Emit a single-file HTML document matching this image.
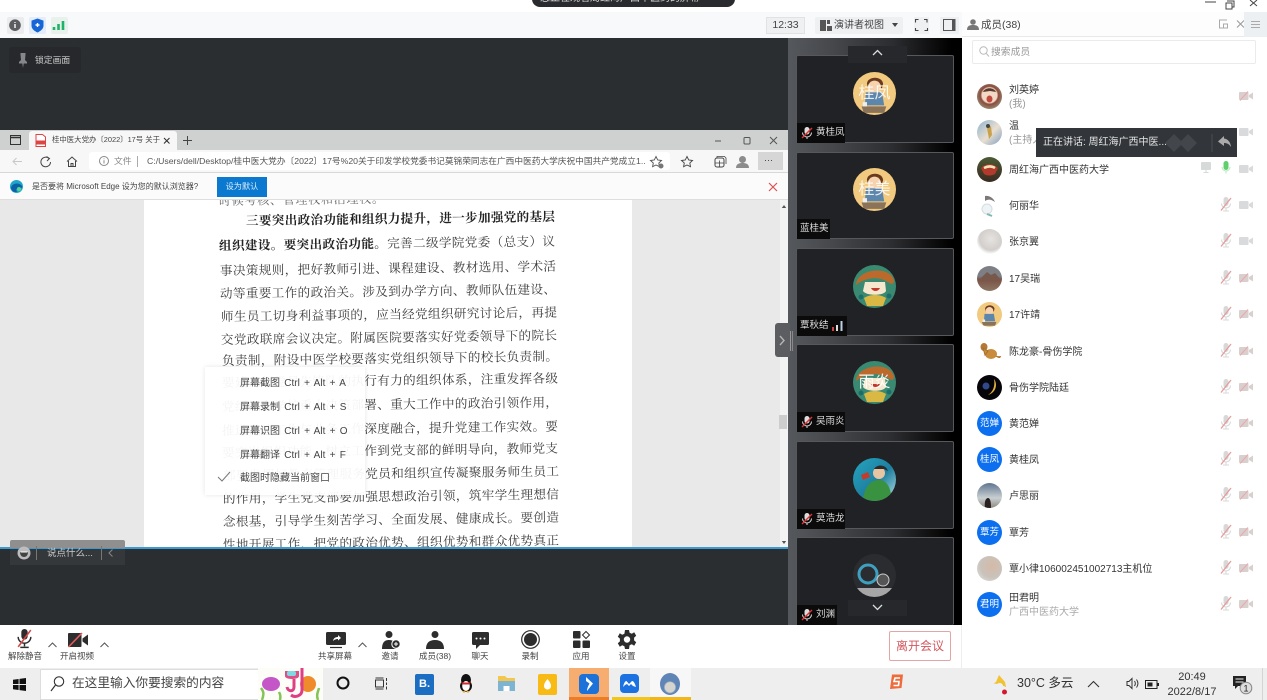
<!DOCTYPE html>
<html lang="zh"><head><meta charset="utf-8"><title>会议</title>
<style>
*{box-sizing:border-box;margin:0;padding:0}
html,body{width:1267px;height:700px;overflow:hidden;background:#fff}
body{font-family:"Liberation Sans","Noto Sans CJK SC",sans-serif;position:relative;color:#333;filter:blur(.3px)}
.a{position:absolute;white-space:nowrap}
svg{position:absolute;overflow:visible}
.ln{position:absolute;height:18px;line-height:18px;font-family:"Liberation Serif","Noto Serif CJK SC",serif;font-size:12.6px;color:#3b3b3b;text-align:justify;text-align-last:justify;white-space:normal;transform:rotate(-.75deg);transform-origin:0 50%}
.ln b{font-weight:700;color:#222}
.th{position:absolute;left:796px;width:158px;background:#212225;border:1px solid #56585b;border-radius:2px}
.lb{position:absolute;background:#0b0b0c;color:#ddd;font-size:9.5px;height:20px;line-height:20px;white-space:nowrap}
.av{position:absolute;border-radius:50%;overflow:hidden}
.row{position:absolute;left:962px;width:305px;height:36px}
.row .nm{position:absolute;left:47px;top:12.500px;font-size:10px;line-height:14px;color:#333;white-space:nowrap}
.row .sb{position:absolute;left:47px;top:20px;font-size:10px;line-height:13px;color:#999;white-space:nowrap}
.ca{position:absolute;left:15px;top:6px;width:25px;height:25px;border-radius:50%;overflow:hidden}
.bl{background:#0b6fef;color:#fff;font-size:9.5px;text-align:center;line-height:25px}
.tl{position:absolute;top:650px;font-size:8.5px;color:#444;text-align:center;white-space:nowrap;line-height:12px}
</style></head><body>
<svg width="0" height="0" style="position:absolute">
<symbol id="mic" viewBox="0 0 16 16"><rect x="5.5" y="1" width="5" height="9" rx="2.5" fill="#d8d8d8"/><path d="M3.5 7.5a4.5 4.5 0 0 0 9 0M8 12v2.500M5 15h6" fill="none" stroke="#d8d8d8" stroke-width="1.100"/><path d="M3 14.500 13 2" stroke="#e79a9a" stroke-width="1.300"/></symbol>
<symbol id="cam" viewBox="0 0 14 10"><rect x="0" y="1" width="9.500" height="8" rx="1" fill="#d9cfcf"/><path d="M10 4l4-2.500v7L10 6z" fill="#d9cfcf"/><path d="M1 9.500 9 .5" stroke="#eaa9a9" stroke-width="1"/></symbol>
<symbol id="cam2" viewBox="0 0 14 10"><rect x="0" y="1" width="9.500" height="8" rx="1" fill="#d9dadb"/><path d="M10 4l4-2.500v7L10 6z" fill="#d9dadb"/></symbol>
<symbol id="boy" viewBox="0 0 40 40"><rect width="40" height="40" fill="#f1c97f"/><path d="M13 11c0-7 14-8 15 0l-1 4H14z" fill="#6b3a1d"/><circle cx="20" cy="14" r="6" fill="#f6d3ae"/><path d="M12 19h15l2 12H11z" fill="#5d86ad"/><path d="M8 32h23l-2 6H10z" fill="#8a7358"/><rect x="9" y="28" width="4" height="4" fill="#eee"/></symbol>
<symbol id="lm" viewBox="0 0 14 14"><rect x="4.500" y="1" width="5" height="7.500" rx="2.500" fill="#ddd"/><path d="M2.500 6.500a4.500 4.500 0 0 0 9 0M7 11v2" fill="none" stroke="#ddd" stroke-width="1"/><path d="M2 12 12 2" stroke="#d33" stroke-width="1.400"/></symbol>
<symbol id="kid" viewBox="0 0 43 43"><rect width="43" height="43" fill="#3a8a72"/><path d="M3 20C4 3 38 0 41 16 40 22 36 17 31 15 22 11 10 14 3 20z" fill="#bc6a2b"/><path d="M12 17h20l1 9c-2 5-20 5-23 0z" fill="#f6e8cf"/><path d="M18 23c2 4 7 4 9 0z" fill="#c0392b"/><path d="M11 33c6-4 16-4 22 0l-3 8H14z" fill="#d9b944"/><circle cx="8" cy="32" r="2.500" fill="#1d6c6c"/><circle cx="36" cy="31" r="2.500" fill="#1d6c6c"/></symbol>
</svg>

<!-- top white + title pill -->
<div class="a" style="left:532px;top:-10px;width:203px;height:17px;background:#2a2b2e;border-radius:0 0 8px 8px;color:#ddd;font-size:10px;line-height:14px;padding:0 8px;overflow:hidden"><span style="position:relative;top:2px">您正在观看周红海广西中医药的屏幕</span></div>
<svg style="left:1200px;top:0" width="67" height="12"><path d="M5 2h11" stroke="#444"/><path d="M27 1h7v6h-2M26 3h6v6h-6z" fill="none" stroke="#444"/><path d="M50 0l7 6M57 0l-7 6" stroke="#444"/></svg>

<!-- toolbar -->
<div class="a" style="left:0;top:12px;width:962px;height:26px;background:#f8f9fa"></div>
<div class="a" style="left:7px;top:17px;width:17px;height:17px;background:#eaecee;border-radius:2px"></div>
<div class="a" style="left:29px;top:17px;width:17px;height:17px;background:#e4edf8;border-radius:2px"></div>
<div class="a" style="left:51px;top:17px;width:17px;height:17px;background:#e8f1ec;border-radius:2px"></div>
<svg style="left:9px;top:19px" width="13" height="13"><circle cx="6" cy="6.200" r="5.800" fill="#5c5d60"/><path d="M6 3v.9M6 5v4" stroke="#fff" stroke-width="1.400"/></svg>
<svg style="left:31px;top:18px" width="13" height="15"><path d="M6.500.5 12.500 2.600v5c0 3.200-3 5.500-6 6.900-3-1.400-6-3.700-6-6.900v-5z" fill="#1766d8"/><path d="M6.500 5v4M4.500 7h4" stroke="#fff" stroke-width="1.400"/></svg>
<svg style="left:53px;top:20px" width="13" height="11"><path d="M1 10V7M5.500 10V4M10 10V1" stroke="#1fb36a" stroke-width="2.600"/></svg>
<div class="a" style="left:766px;top:17px;width:39px;height:17px;background:#eef0f2;border:1px solid #e0e2e4;font-size:10.500px;line-height:15px;text-align:center;color:#444">12:33</div>
<div class="a" style="left:815px;top:17px;width:88px;height:17px;background:#eef0f2;border-radius:2px"></div>
<svg style="left:820px;top:20px" width="12" height="11"><path d="M0 0h6v11H0zM7 6h5v5H7zM7 0h3v4H7z" fill="#555"/></svg>
<div class="a" style="left:834px;top:17px;font-size:10px;line-height:17px;color:#444">演讲者视图</div>
<svg style="left:892px;top:23px" width="7" height="5"><path d="M0 0h6L3 4z" fill="#444"/></svg>
<div class="a" style="left:914px;top:17px;width:15px;height:17px;background:#eef0f2"></div>
<svg style="left:915px;top:19px" width="13" height="12"><path d="M.5 3.500v-3h3M9 .5h3v3M12.500 9v2.500h-3M3.500 11.500h-3V9" fill="none" stroke="#444" stroke-width="1.100"/></svg>
<div class="a" style="left:940px;top:17px;width:19px;height:17px;background:#eef0f2"></div>
<svg style="left:943px;top:19px" width="13" height="12"><rect x=".5" y=".5" width="11.500" height="11" fill="none" stroke="#555"/><path d="M9 0h3v12H9z" fill="#555"/></svg>

<!-- main dark -->
<div class="a" style="left:0;top:38px;width:788px;height:587px;background:#2b2e31"></div>
<div class="a" style="left:9px;top:47px;width:72px;height:26px;background:#26282b;border-radius:3px"></div>
<svg style="left:18px;top:53px" width="10" height="15"><path d="M2.500 0h5v1.500L7 7l2 2v1.500H5.700L5 15l-.7-4.500H1V9l2-2-.5-5.500z" fill="#85878a"/></svg>
<div class="a" style="left:35px;top:52px;font-size:8.800px;line-height:16px;color:#cfcfcf">锁定画面</div>

<!-- browser window -->
<div class="a" style="left:0;top:130px;width:788px;height:418px;background:#f7f7f7;overflow:hidden">
 <div class="a" style="left:0;top:0;width:788px;height:20px;background:#cfd0d0"></div>
 <div class="a" style="left:29px;top:1px;width:148px;height:19px;background:#f7f7f7;border-radius:3px 3px 0 0"></div>
 <svg style="left:10px;top:5px" width="11" height="10"><rect x=".5" y=".5" width="10" height="9" fill="none" stroke="#333"/><path d="M.5 2.500h10" stroke="#333" stroke-width="1.500"/></svg>
 <svg style="left:35px;top:4px" width="11" height="13"><path d="M1 .5h6.500L10.500 3v9.500H1z" fill="#fff" stroke="#d44"/><rect x="1" y="6.500" width="9" height="4" fill="#d44"/></svg>
 <div class="a" style="left:52px;top:3px;font-size:7.400px;line-height:14px;color:#444">桂中医大党办〔2022〕17号 关于</div>
 <svg style="left:163px;top:7px" width="8" height="8"><path d="M1 1l5.500 5.500M6.500 1 1 6.500" stroke="#333" stroke-width="1.100"/></svg>
 <svg style="left:182px;top:5px" width="11" height="11"><path d="M5.500 1v9M1 5.500h9" stroke="#444"/></svg>
 <svg style="left:712px;top:5px" width="70" height="11"><path d="M3 6h6" stroke="#555"/><rect x="32" y="2.500" width="6" height="6.500" rx="1" fill="none" stroke="#555"/><path d="M58 2l7 7M65 2l-7 7" stroke="#555"/></svg>
 <div class="a" style="left:0;top:20px;width:788px;height:23px;background:#f7f7f7;border-bottom:1px solid #d8d8d8"></div>
 <div class="a" style="left:89px;top:22px;width:581px;height:18px;background:#fff;border-radius:3px"></div>
 <svg style="left:12px;top:25px" width="70" height="14"><path d="M1 6.500h9M4.500 3 1 6.500 4.500 10" fill="none" stroke="#c8c8c8"/><path d="M37 3.500a4.800 4.800 0 1 0 1.500 3.500M34.500 1.500 37.500 3.500 35 6" fill="none" stroke="#444"/><path d="M55 6.500 60 2l5 4.500M56.500 6v5.500h7V6M59 11.500v-3h2v3" fill="none" stroke="#444"/></svg>
 <svg style="left:99px;top:26px" width="11" height="11"><circle cx="5" cy="5" r="4.500" fill="none" stroke="#888"/><path d="M5 2.500v.8M5 4.300v3.200" stroke="#888"/></svg>
 <div class="a" style="left:114px;top:24px;font-size:8.800px;line-height:14px;color:#888">文件</div>
 <div class="a" style="left:137px;top:26px;width:1px;height:11px;background:#aaa"></div>
 <div class="a" style="left:147px;top:24px;width:498px;overflow:hidden;font-size:8.700px;line-height:14px;color:#555">C:/Users/dell/Desktop/桂中医大党办〔2022〕17号%20关于印发学校党委书记莫锦荣同志在广西中医药大学庆祝中国共产党成立1...</div>
 <svg style="left:650px;top:25px" width="125" height="14"><path d="M6 1.500 7.700 5l3.800.5L8.800 8l.7 3.700L6 10 2.600 11.700 3.300 8 .5 5.500 4.300 5z" fill="none" stroke="#555" stroke-width=".9"/><circle cx="11" cy="11" r="2.500" fill="#777"/><path d="M37 1.500 38.700 5l3.800.5L39.800 8l.7 3.700L37 10l-3.400 1.700.7-3.700-2.800-2.500 3.800-.5z" fill="none" stroke="#444" stroke-width=".9"/><rect x="65" y="3" width="9" height="9" rx="2" fill="none" stroke="#444"/><path d="M69.500 5.500v6.500M65 8h9M67 3V1.500h7.500L76 3v6" fill="none" stroke="#444" stroke-width=".8"/><circle cx="92.500" cy="4.500" r="3.500" fill="#8c8c8c"/><path d="M86 13c0-4 3-5 6.500-5s6.500 1 6.500 5z" fill="#8c8c8c"/></svg>
 <div class="a" style="left:758px;top:22px;width:25px;height:18px;background:#d6d6d6"></div>
 <div class="a" style="left:764px;top:24px;font-size:9px;line-height:12px;color:#333">···</div>
 <div class="a" style="left:0;top:43px;width:788px;height:27px;background:#fbfbfb;border-bottom:1px solid #dedede"></div>
 <svg style="left:10px;top:50px" width="13" height="13"><circle cx="6.500" cy="6.500" r="6.500" fill="#1ea7c9"/><path d="M1 8C2 3 9 2 12 6c.8 2-1 2.500-4 2.500-2 0-2.500 1.500-.5 3C4 13 1.500 11 1 8z" fill="#0d5fa8"/><circle cx="9" cy="9" r="2" fill="#58d38a"/></svg>
 <div class="a" style="left:32px;top:49px;font-size:8px;line-height:15px;color:#444">是否要将 Microsoft Edge 设为您的默认浏览器?</div>
 <div class="a" style="left:217px;top:47px;width:50px;height:20px;background:#0b79d0;color:#dbeefc;font-size:8.200px;line-height:20px;text-align:center">设为默认</div>
 <svg style="left:768px;top:52px" width="10" height="10"><path d="M1 1l8 8M9 1 1 9" stroke="#d9534f" stroke-width="1.200"/></svg>
 <div class="a" style="left:0;top:70px;width:144px;height:348px;background:#e8e8e8"></div>
 <div class="a" style="left:632px;top:70px;width:148px;height:348px;background:#e9e9e9"></div>
 <div class="a" style="left:780px;top:70px;width:8px;height:348px;background:#f3f3f3"></div>
 <svg style="left:781px;top:73px" width="6" height="342"><path d="M3 2 .8 5h4.400zM3 341 .8 338h4.400z" fill="#555"/></svg>
 <div class="a" style="left:779px;top:285px;width:8px;height:14px;background:#cdcdcd"></div>
 <div class="a" style="left:144px;top:70px;width:488px;height:348px;background:#fff"></div>
</div>

<!-- document text -->
<div class="a" style="left:0;top:200px;width:788px;height:347px;overflow:hidden">
<div class="ln" style="left:219px;width:165px;top:-8px;font-size:12px;color:#666">时候考核、管理权和治理权。</div>
<div class="ln" style="left:246px;width:309px;top:12px"><b>三要突出政治功能和组织力提升，进一步加强党的基层</b></div>
<div class="ln" style="left:219px;width:336px;top:37px"><b>组织建设。要突出政治功能。</b>完善二级学院党委（总支）议</div>
<div class="ln" style="left:220px;width:336px;top:62px">事决策规则，把好教师引进、课程建设、教材选用、学术活</div>
<div class="ln" style="left:220px;width:336px;top:85px">动等重要工作的政治关。涉及到办学方向、教师队伍建设、</div>
<div class="ln" style="left:221px;width:336px;top:108px">师生员工切身利益事项的，应当经党组织研究讨论后，再提</div>
<div class="ln" style="left:221px;width:336px;top:131px">交党政联席会议决定。附属医院要落实好党委领导下的院长</div>
<div class="ln" style="left:222px;width:336px;top:152px">负责制，附设中医学校要落实党组织领导下的校长负责制。</div>
<div class="ln" style="left:222px;width:336px;top:174px">要建立起党员先锋队的执行有力的组织体系，注重发挥各级</div>
<div class="ln" style="left:222px;width:336px;top:198px">党组织在学校重大决策部署、重大工作中的政治引领作用，</div>
<div class="ln" style="left:222px;width:336px;top:222px">推进党建工作与业务工作深度融合，提升党建工作实效。要</div>
<div class="ln" style="left:222px;width:336px;top:244px">要突出组织功能。树立工作到党支部的鲜明导向，教师党支</div>
<div class="ln" style="left:223px;width:336px;top:267px">部要发挥好教育管理服务党员和组织宣传凝聚服务师生员工</div>
<div class="ln" style="left:223px;width:336px;top:290px">的作用，学生党支部要加强思想政治引领，筑牢学生理想信</div>
<div class="ln" style="left:223px;width:336px;top:313px">念根基，引导学生刻苦学习、全面发展、健康成长。要创造</div>
<div class="ln" style="left:223px;width:336px;top:336px">性地开展工作，把党的政治优势、组织优势和群众优势真正</div>
</div>

<!-- popup -->
<div class="a" style="left:205px;top:367px;width:160px;height:128px;background:rgba(255,255,255,.94);box-shadow:0 0 5px rgba(0,0,0,.1);color:#444;font-size:10px;word-spacing:1.500px">
 <div class="a" style="left:35px;top:9px;line-height:15px">屏幕截图 Ctrl + Alt + A</div>
 <div class="a" style="left:35px;top:33px;line-height:15px">屏幕录制 Ctrl + Alt + S</div>
 <div class="a" style="left:35px;top:57px;line-height:15px">屏幕识图 Ctrl + Alt + O</div>
 <div class="a" style="left:35px;top:81px;line-height:15px">屏幕翻译 Ctrl + Alt + F</div>
 <div class="a" style="left:35px;top:104px;line-height:15px">截图时隐藏当前窗口</div>
 <svg style="left:12px;top:104px" width="14" height="12"><path d="M1 6l4 4 8-9" fill="none" stroke="#777" stroke-width="1"/></svg>
</div>

<div class="a" style="left:0;top:547px;width:788px;height:2px;background:#3a9bd2"></div>
<!-- chat -->
<div class="a" style="left:10px;top:540px;width:115px;height:8px;background:#8f8f8f;border-radius:2px 2px 0 0"></div>
<div class="a" style="left:10px;top:549px;width:115px;height:16px;background:#35383b"></div>
<svg style="left:17px;top:546px" width="14" height="14"><circle cx="7" cy="7" r="6.500" fill="#bdbdbd"/><path d="M3 6h8c0 3-1.500 5-4 5S3 9 3 6z" fill="#444"/><path d="M3.500 6h7" stroke="#fff"/></svg>
<div class="a" style="left:36px;top:546px;width:1px;height:14px;background:#777"></div>
<div class="a" style="left:47px;top:546px;font-size:9.500px;line-height:15px;color:#ccc">说点什么...</div>
<div class="a" style="left:101px;top:546px;width:1px;height:14px;background:#777"></div>
<svg style="left:108px;top:549px" width="6" height="8"><path d="M4.500 .5 1 4l3.500 3.500" fill="none" stroke="#888"/></svg>

<!-- right strip -->
<div class="a" style="left:788px;top:38px;width:174px;height:587px;background:linear-gradient(90deg,#55585c 0,#46484c 25%,#2c2d30 60%,#000 94%)"></div>
<div class="th" style="top:55px;height:88px"></div>
<div class="th" style="top:152px;height:87px"></div>
<div class="th" style="top:248px;height:88px"></div>
<div class="th" style="top:344px;height:88px"></div>
<div class="th" style="top:441px;height:88px"></div>
<div class="th" style="top:537px;height:88px;border-bottom:0"></div>
<div class="a" style="left:848px;top:46px;width:59px;height:17px;background:#26282b"></div>
<svg style="left:872px;top:49px" width="11" height="7"><path d="M1 6 5.500 1.500 10 6" fill="none" stroke="#ddd" stroke-width="1.300"/></svg>
<div class="a" style="left:848px;top:600px;width:59px;height:16px;background:#26282b"></div>
<svg style="left:872px;top:604px" width="11" height="7"><path d="M1 1l4.500 4.500L10 1" fill="none" stroke="#ddd" stroke-width="1.300"/></svg>

<div class="av" style="left:853px;top:72px;width:43px;height:43px"><svg width="43" height="43"><use href="#boy"/></svg><div class="a" style="left:0;width:43px;text-align:center;top:10px;font-size:16px;line-height:23px;color:rgba(255,255,255,.85)">桂凤</div></div>
<div class="av" style="left:853px;top:168px;width:43px;height:43px"><svg width="43" height="43"><use href="#boy"/></svg><div class="a" style="left:0;width:43px;text-align:center;top:10px;font-size:16px;line-height:23px;color:rgba(255,255,255,.85)">桂美</div></div>
<div class="av" style="left:853px;top:265px;width:43px;height:43px"><svg width="43" height="43"><use href="#kid"/></svg></div>
<div class="av" style="left:853px;top:361px;width:43px;height:43px"><svg width="43" height="43"><use href="#kid"/></svg><div class="a" style="left:0;width:43px;text-align:center;top:10px;font-size:16px;line-height:23px;color:rgba(255,255,255,.92)">雨炎</div></div>
<div class="av" style="left:853px;top:458px;width:43px;height:43px;background:linear-gradient(135deg,#25a5c0,#1e7fa0 55%,#b8e0e0)"><svg width="43" height="43"><path d="M10 43C11 28 18 22 26 22s12 8 13 21z" fill="#39923f"/><circle cx="26" cy="15" r="6" fill="#e7c5a2"/><path d="M21 11c3-5 12-5 14 2l-4-2z" fill="#2b2b2b"/><path d="M8 17l7-3 2 5-7 3z" fill="#c63a2a"/></svg></div>
<div class="av" style="left:853px;top:554px;width:43px;height:43px;background:#2a2c30"><svg width="43" height="43"><path d="M4 34h36v9H4z" fill="#a6a6a6"/><circle cx="15" cy="20" r="9" fill="none" stroke="#3f9fc0" stroke-width="3"/><circle cx="30" cy="26" r="6" fill="#555" stroke="#ccc"/></svg></div>

<div class="lb" style="left:797px;top:123px;width:48px;padding-left:19px">黄桂凤</div>
<svg style="left:800px;top:126px" width="14" height="14"><use href="#lm"/></svg>
<div class="lb" style="left:797px;top:219px;width:33px;padding-left:3px">蓝桂美</div>
<div class="lb" style="left:797px;top:316px;width:50px;padding-left:3px">覃秋结</div>
<svg style="left:832px;top:320px" width="13" height="12"><path d="M1 11V7" stroke="#d64040" stroke-width="2"/><path d="M5 11V5" stroke="#ddd" stroke-width="2"/><path d="M9.500 11V1" stroke="#bcd0e6" stroke-width="2"/></svg>
<div class="lb" style="left:797px;top:412px;width:48px;padding-left:19px">吴雨炎</div>
<svg style="left:800px;top:415px" width="14" height="14"><use href="#lm"/></svg>
<div class="lb" style="left:797px;top:509px;width:48px;padding-left:19px">莫浩龙</div>
<svg style="left:800px;top:512px" width="14" height="14"><use href="#lm"/></svg>
<div class="lb" style="left:797px;top:605px;width:40px;padding-left:19px">刘渊</div>
<svg style="left:800px;top:608px" width="14" height="14"><use href="#lm"/></svg>

<!-- side handle -->
<div class="a" style="left:775px;top:323px;width:15px;height:34px;background:#5b5d60;border-radius:3px 0 0 3px"></div>
<svg style="left:779px;top:335px" width="7" height="11"><path d="M1 1l4 4.500L1 10" fill="none" stroke="#b5b5b5" stroke-width="1.400"/></svg>
<div class="a" style="left:790px;top:331px;width:1px;height:20px;background:#999"></div>
<div class="a" style="left:792px;top:331px;width:1px;height:20px;background:#888"></div>

<!-- members panel -->
<div class="a" style="left:962px;top:12px;width:305px;height:613px;background:#fff"></div>
<div class="a" style="left:962px;top:12px;width:305px;height:25px;background:#fdfdfd;border-bottom:1px solid #e9e9e9"></div>
<svg style="left:967px;top:19px" width="12" height="11"><circle cx="6" cy="3" r="2.800" fill="#777"/><path d="M0 11c0-4 2.500-5 6-5s6 1 6 5z" fill="#777"/></svg>
<div class="a" style="left:981px;top:17px;font-size:10.500px;line-height:16px;color:#444">成员(38)</div>
<svg style="left:1219px;top:19px" width="24" height="11"><path d="M8 1H.5v8H4" fill="none" stroke="#aaa"/><rect x="4.500" y="5" width="4" height="4" fill="none" stroke="#aaa"/><path d="M18 1.500l7 7M25 1.500l-7 7" stroke="#999"/></svg>
<div class="a" style="left:1244px;top:12px;width:23px;height:25px;background:#edf0f3"></div>
<svg style="left:1250px;top:21px" width="11" height="8"><path d="M1 .5h9M1 3.500h9M1 6.500h9" stroke="#aaa"/></svg>
<div class="a" style="left:972px;top:40px;width:284px;height:24px;border:1px solid #ebebeb;border-radius:2px"></div>
<svg style="left:979px;top:46px" width="11" height="12"><circle cx="4.500" cy="4.500" r="3.700" fill="none" stroke="#bbb"/><path d="M7.300 7.500l2.700 3" stroke="#bbb"/></svg>
<div class="a" style="left:991px;top:45px;font-size:9.800px;line-height:15px;color:#999">搜索成员</div>

<div class="row" style="top:78px"><div class="ca" style="background:radial-gradient(circle at 50% 45%,#f2d8c5 0 40%,#8a4a3c 48%,#9fc2a4)"><svg width="25" height="25"><path d="M6 8C8 3 17 3 19 8l-6-1z" fill="#5a3b30"/><ellipse cx="12.500" cy="15" rx="3" ry="3.500" fill="#c14a3e"/></svg></div><div class="nm" style="top:6px">刘英婷</div><div class="sb">(我)</div><svg style="left:277px;top:13px" width="14" height="10"><use href="#cam"/></svg></div>
<div class="row" style="top:114px"><div class="ca" style="background:linear-gradient(135deg,#8db3cf,#e9dfd0 55%,#7c9dc3)"><svg width="25" height="25"><path d="M10 8l4-2 1 9-3 4z" fill="#c9a14a"/><circle cx="11" cy="6" r="2" fill="#444"/></svg></div><div class="nm" style="top:6px">温</div><div class="sb">(主持人)</div><svg style="left:277px;top:13px" width="14" height="10"><use href="#cam2"/></svg></div>
<div class="row" style="top:151px"><div class="ca" style="background:linear-gradient(#4c5a35,#3a2a20)"><svg width="25" height="25"><path d="M4 11c5-5 12-5 17 0l-3 6c-4 2-8 2-11 0z" fill="#b23a2c"/><path d="M7 11c4-2 8-2 11 0" stroke="#f2e4b8" stroke-width="2.500" fill="none"/></svg></div><div class="nm">周红海广西中医药大学</div><svg style="left:239px;top:11px" width="11" height="11"><rect width="10" height="8" rx="1" fill="#d6dad8"/><path d="M5 8v2.500M2.500 10.500h5" stroke="#d6dad8"/></svg><svg style="left:258px;top:10px" width="12" height="14"><rect x="3.500" y="0" width="5" height="9" rx="2.500" fill="#5cd06a"/><path d="M2 6a4 4 0 0 0 8 0M6 10v2.500" fill="none" stroke="#b8e8bd"/></svg><svg style="left:277px;top:13px" width="14" height="10"><use href="#cam2"/></svg></div>
<div class="row" style="top:187px"><div class="ca" style="background:#fff"><svg width="25" height="25"><path d="M8 3c5-1 9 3 10 6-4-3-7-3-10-1z" fill="#7f7878"/><circle cx="10" cy="16" r="5" fill="#eef3f5" stroke="#d4dde2"/><path d="M10 21l5 2" stroke="#7fb7b2" stroke-width="2"/></svg></div><div class="nm">何丽华</div><svg style="left:256px;top:9px" width="16" height="16"><use href="#mic"/></svg><svg style="left:277px;top:13px" width="14" height="10"><use href="#cam2"/></svg></div>
<div class="row" style="top:223px"><div class="ca" style="background:radial-gradient(circle at 55% 40%,#e6e3e1,#d2cecc 55%,#fafafa 72%)"></div><div class="nm">张京翼</div><svg style="left:256px;top:9px" width="16" height="16"><use href="#mic"/></svg><svg style="left:277px;top:13px" width="14" height="10"><use href="#cam2"/></svg></div>
<div class="row" style="top:260px"><div class="ca" style="background:linear-gradient(#7d7f84 0 40%,#7a5347 55%,#8d7664)"><svg width="25" height="25"><path d="M3 13 10 6l4 3 4-2 5 6z" fill="#77584c"/></svg></div><div class="nm">17吴瑞</div><svg style="left:256px;top:9px" width="16" height="16"><use href="#mic"/></svg><svg style="left:277px;top:13px" width="14" height="10"><use href="#cam"/></svg></div>
<div class="row" style="top:296px"><div class="ca"><svg width="25" height="25"><use href="#boy"/></svg></div><div class="nm">17许靖</div><svg style="left:256px;top:9px" width="16" height="16"><use href="#mic"/></svg><svg style="left:277px;top:13px" width="14" height="10"><use href="#cam"/></svg></div>
<div class="row" style="top:333px"><div class="ca" style="background:#fff"><svg width="25" height="25"><ellipse cx="7" cy="8" rx="3.500" ry="4" fill="#b27a35"/><ellipse cx="14" cy="15" rx="6" ry="5" fill="#c98c3c"/><path d="M6 9l5 3-3 4zM19 17c3 2 4 2 6 0" fill="#c98c3c" stroke="#a66f2c"/></svg></div><div class="nm">陈龙豪-骨伤学院</div><svg style="left:256px;top:9px" width="16" height="16"><use href="#mic"/></svg><svg style="left:277px;top:13px" width="14" height="10"><use href="#cam"/></svg></div>
<div class="row" style="top:369px"><div class="ca" style="background:#06060a"><svg width="25" height="25"><path d="M17 4c4 5 2 14-6 16 6-4 7-10 6-16z" fill="#e3b23c"/><circle cx="9" cy="11" r="3.500" fill="#31488c"/></svg></div><div class="nm">骨伤学院陆廷</div><svg style="left:256px;top:9px" width="16" height="16"><use href="#mic"/></svg><svg style="left:277px;top:13px" width="14" height="10"><use href="#cam"/></svg></div>
<div class="row" style="top:405px"><div class="ca bl">范婵</div><div class="nm">黄范婵</div><svg style="left:256px;top:9px" width="16" height="16"><use href="#mic"/></svg><svg style="left:277px;top:13px" width="14" height="10"><use href="#cam"/></svg></div>
<div class="row" style="top:441px"><div class="ca bl">桂凤</div><div class="nm">黄桂凤</div><svg style="left:256px;top:9px" width="16" height="16"><use href="#mic"/></svg><svg style="left:277px;top:13px" width="14" height="10"><use href="#cam"/></svg></div>
<div class="row" style="top:477px"><div class="ca" style="background:linear-gradient(#5f7590,#c9d0d2 60%,#8c8a80)"><svg width="25" height="25"><path d="M8 25c-1-7 1-10 3-10s3 3 3 10z" fill="#2a2020"/></svg></div><div class="nm">卢思丽</div><svg style="left:256px;top:9px" width="16" height="16"><use href="#mic"/></svg><svg style="left:277px;top:13px" width="14" height="10"><use href="#cam"/></svg></div>
<div class="row" style="top:514px"><div class="ca bl">覃芳</div><div class="nm">覃芳</div><svg style="left:256px;top:9px" width="16" height="16"><use href="#mic"/></svg><svg style="left:277px;top:13px" width="14" height="10"><use href="#cam"/></svg></div>
<div class="row" style="top:550px"><div class="ca" style="background:radial-gradient(circle at 60% 40%,#d5b9a6,#c9c3bc 55%,#e5e5e2)"></div><div class="nm">覃小律106002451002713主机位</div><svg style="left:256px;top:9px" width="16" height="16"><use href="#mic"/></svg><svg style="left:277px;top:13px" width="14" height="10"><use href="#cam"/></svg></div>
<div class="row" style="top:586px"><div class="ca bl">君明</div><div class="nm" style="top:6px">田君明</div><div class="sb" style="top:20px;color:#aaa">广西中医药大学</div><svg style="left:256px;top:9px" width="16" height="16"><use href="#mic"/></svg><svg style="left:277px;top:13px" width="14" height="10"><use href="#cam"/></svg></div>

<!-- speaking bubble -->
<div class="a" style="left:1036px;top:128px;width:201px;height:29px;background:#32353a"></div>
<div class="a" style="left:1043px;top:135px;font-size:10px;line-height:16px;color:#e4e4e4">正在讲话: 周红海广西中医...</div>
<svg style="left:1165px;top:132px" width="70" height="22"><path d="M0 11l9-9 9 9-9 9zM14 11l9-9 9 9-9 9z" fill="#43464a"/><path d="M47 2v18" stroke="#4b4e52"/><path d="M59 4 53 9.500 59 14v-3c3 0 5 1 7 4-.5-5-3-8-7-8.500z" fill="#aaa"/></svg>

<!-- bottom toolbar -->
<div class="a" style="left:0;top:625px;width:962px;height:43px;background:#fff"></div>
<div class="a" style="left:961px;top:625px;width:1px;height:43px;background:#eee"></div>
<svg style="left:16px;top:629px" width="17" height="20" viewBox="0 0 16 19"><rect x="5" y="0" width="6" height="10" rx="3" fill="#2d2d2d"/><path d="M2 7.500a6 6 0 0 0 12 0M8 13.500v3M4 17.500h8" fill="none" stroke="#2d2d2d" stroke-width="1.400"/><path d="M2 17 14 1" stroke="#d84848" stroke-width="1.500"/></svg>
<svg style="left:48px;top:642px" width="9" height="6"><path d="M.5 5 4.500 1l4 4" fill="none" stroke="#555"/></svg>
<svg style="left:68px;top:633px" width="20" height="14"><rect x="0" y="0" width="13.500" height="14" rx="1" fill="#2d2d2d"/><path d="M14.500 5.500 20 1.500v11l-5.500-4z" fill="#2d2d2d"/><path d="M.5 14 14 0" stroke="#e35b5b" stroke-width="1.600"/></svg>
<svg style="left:100px;top:642px" width="9" height="6"><path d="M.5 5 4.500 1l4 4" fill="none" stroke="#555"/></svg>
<div class="tl" style="left:0;width:50px">解除静音</div>
<div class="tl" style="left:52px;width:50px">开启视频</div>
<svg style="left:326px;top:632px" width="20" height="16"><rect width="20" height="13" rx="1.500" fill="#2d2d2d"/><path d="M4 15.500h12" stroke="#2d2d2d" stroke-width="1.200"/><path d="M7 9c.5-3 2.500-4 5-4V3l3 3-3 2.500V7c-2 0-3.500.5-5 2z" fill="#fff"/></svg>
<svg style="left:358px;top:642px" width="9" height="6"><path d="M.5 5 4.500 1l4 4" fill="none" stroke="#555"/></svg>
<div class="tl" style="left:310px;width:50px">共享屏幕</div>
<svg style="left:381px;top:631px" width="20" height="18"><circle cx="8" cy="3.500" r="3.500" fill="#2d2d2d"/><path d="M1 18c0-7 3-9 7-9s6 2 6.500 4.500V18z" fill="#2d2d2d"/><circle cx="15" cy="13" r="4.200" fill="#2d2d2d" stroke="#fff"/><path d="M15 11v4M13 13h4" stroke="#fff"/></svg>
<div class="tl" style="left:375px;width:30px">邀请</div>
<svg style="left:426px;top:631px" width="18" height="18"><circle cx="9" cy="3.500" r="3.500" fill="#2d2d2d"/><path d="M0 18c0-6 3-9 9-9s9 3 9 9z" fill="#2d2d2d"/></svg>
<div class="tl" style="left:415px;width:40px">成员(38)</div>
<svg style="left:472px;top:632px" width="17" height="17"><path d="M1.500 0h14A1.500 1.500 0 0 1 17 1.500v10a1.500 1.500 0 0 1-1.500 1.500H8l-4 4v-4H1.500A1.500 1.500 0 0 1 0 11.500v-10A1.500 1.500 0 0 1 1.500 0z" fill="#2d2d2d"/><circle cx="4.500" cy="6.500" r="1" fill="#fff"/><circle cx="8.500" cy="6.500" r="1" fill="#fff"/><circle cx="12.500" cy="6.500" r="1" fill="#fff"/></svg>
<div class="tl" style="left:465px;width:30px">聊天</div>
<svg style="left:521px;top:630px" width="19" height="19"><circle cx="9.500" cy="9.500" r="8.800" fill="none" stroke="#2d2d2d" stroke-width="1.200"/><circle cx="9.500" cy="9.500" r="6.500" fill="#2d2d2d"/></svg>
<div class="tl" style="left:515px;width:30px">录制</div>
<svg style="left:573px;top:631px" width="17" height="18"><rect width="7.500" height="7.500" rx="1" fill="#2d2d2d"/><path d="M13 .5 16.500 4 13 7.500 9.500 4z" fill="none" stroke="#2d2d2d"/><rect y="9.500" width="7.500" height="7.500" rx="1" fill="#2d2d2d"/><rect x="9.500" y="9.500" width="7.500" height="7.500" rx="1" fill="#2d2d2d"/></svg>
<div class="tl" style="left:566px;width:30px">应用</div>
<svg style="left:618px;top:630px" width="18" height="19" viewBox="0 0 18 19"><path d="M7 0h4l.6 2.700 2.200 1 2.400-1.400 2 3.500-2.100 1.800v2.800l2.100 1.800-2 3.500-2.400-1.400-2.200 1L11 19H7l-.6-2.700-2.200-1-2.400 1.400-2-3.500 2.100-1.800V8.600L-.2 6.800l2-3.500 2.400 1.400 2.200-1z" fill="#2d2d2d"/><circle cx="9" cy="9.500" r="3.200" fill="#fff"/></svg>
<div class="tl" style="left:612px;width:30px">设置</div>
<div class="a" style="left:889px;top:631px;width:62px;height:30px;border:1px solid #e3a6a6;border-radius:2px;color:#d1585e;font-size:12px;line-height:28px;text-align:center">离开会议</div>

<!-- taskbar -->
<div class="a" style="left:0;top:668px;width:1267px;height:32px;background:#eeeeee"></div>
<svg style="left:13px;top:678px" width="13" height="13"><path d="M0 1.800 5.600 1v5H0zM6.500.9 13 0v6H6.500zM0 7h5.600v5L0 11.200zM6.500 7H13v6l-6.500-.9z" fill="#111"/></svg>
<div class="a" style="left:40px;top:669px;width:283px;height:31px;background:#fff;border:1px solid #ddd"></div>
<svg style="left:50px;top:676px" width="15" height="16"><circle cx="9" cy="5.500" r="4.700" fill="none" stroke="#333" stroke-width="1.100"/><path d="M5.500 9 1 15" stroke="#333" stroke-width="1.200"/></svg>
<div class="a" style="left:72px;top:674px;font-size:12.700px;line-height:19px;color:#444">在这里输入你要搜索的内容</div>
<svg style="left:258px;top:668px" width="65" height="32"><path d="M0 0h65v32H0z" fill="#fdfdf8"/><ellipse cx="13" cy="16" rx="9" ry="7" fill="#c556c8"/><circle cx="50" cy="16" r="8" fill="#ef8b2b"/><path d="M27 3h14v5c0 3-7 3-7 3s-7 0-7-3z" fill="#dc4f87"/><path d="M36 11v8c0 5-6 5-7 0M44 0v22c0 6-7 8-11 5" fill="none" stroke="#df3d84" stroke-width="3"/><rect x="29" y="3" width="9" height="5" rx="2" fill="#7fd8e2"/><path d="M4 32C6 26 6 24 3 20M60 32c-2-5 0-8 1-12M22 32c1-4 0-6-1-8" stroke="#84c356" stroke-width="2.500" fill="none"/></svg>
<svg style="left:336px;top:676px" width="14" height="14"><circle cx="7" cy="7" r="5.500" fill="none" stroke="#111" stroke-width="2"/></svg>
<svg style="left:375px;top:677px" width="15" height="13"><rect x=".5" y="3" width="8" height="7" fill="none" stroke="#333"/><path d="M.5 1h8M.5 12h8M11.500 1v3M11.500 5.500v2.500M11.500 9.500v3" stroke="#333"/></svg>
<div class="a" style="left:415px;top:674px;width:19px;height:21px;background:#1c6ec2;border-radius:2px;color:#fff;font-size:11px;font-weight:700;line-height:21px;text-align:center">B.</div>
<svg style="left:458px;top:673px" width="16" height="21"><ellipse cx="8" cy="7" rx="5" ry="6" fill="#111"/><ellipse cx="8" cy="13" rx="6" ry="6" fill="#111"/><ellipse cx="8" cy="13" rx="3.800" ry="5" fill="#fff"/><path d="M3 9.500h10l-2 2H5z" fill="#d92626"/><path d="M4 18h4l-2 2zM8 18h4l-2 2z" fill="#f2a01b"/></svg>
<svg style="left:498px;top:675px" width="18" height="17"><path d="M0 1h7l2 2h8v3H0z" fill="#f3c64d"/><path d="M0 6h17v10H0z" fill="#7db4d2"/><rect x="5.500" y="11" width="6" height="5" fill="#fff"/><path d="M0 3h17v3H0z" fill="#f3c64d"/></svg>
<div class="a" style="left:538px;top:674px;width:19px;height:21px;background:#f8bb15;border-radius:2px"></div>
<svg style="left:544px;top:679px" width="7" height="11"><path d="M3.500 0C6 3 7 5 7 7a3.500 3.500 0 0 1-7 0c0-2 1-4 3.500-7z" fill="#fff"/></svg>
<div class="a" style="left:569px;top:668px;width:40px;height:32px;background:#f7ad70;border-bottom:3px solid #ec7c26"></div>
<svg style="left:579px;top:674px" width="20" height="20"><rect width="20" height="20" rx="4" fill="#1c72d8"/><path d="M7 3 14 9.500 8 17c0-3 1.500-5.500 2.500-7.500L7 7z" fill="#fff"/></svg>
<div class="a" style="left:612px;top:697px;width:38px;height:3px;background:#efc51e"></div>
<svg style="left:620px;top:674px" width="19" height="19"><rect width="19" height="19" rx="4" fill="#1c72e0"/><path d="M3 13c1-4 2-6 3.500-6L9 10l3-3c2 0 3 3 4 6l-3-1-2-2-2 2-2-2-2 1z" fill="#fff"/></svg>
<div class="a" style="left:650px;top:668px;width:41px;height:32px;background:#f7f7f7;border-bottom:3px solid #f2b61d"></div>
<div class="a" style="left:660px;top:673px;width:20px;height:22px;border-radius:50%;background:radial-gradient(circle at 50% 65%,#d6d4ce 0 28%,#5f85b6 36%)"></div>
<svg style="left:889px;top:674px" width="15" height="16"><path d="M3 .5h11l-1.500 13.500L1 15z" fill="#ee6b3b"/><path d="M11 4H6L5 7.500h5l-.5 4h-5" fill="none" stroke="#fff" stroke-width="1.600"/></svg>
<svg style="left:990px;top:674px" width="20" height="22"><path d="M9 1l6 7 1 5H3c0-3 1-4 3-5z" fill="#f1c232"/><path d="M2 13c0-3 2-4 5-3 2-2 6-1 6 2 2 0 3 1 3 3H3c-1 0-1-1-1-2z" fill="#ecf0f4"/><circle cx="14.500" cy="18" r="2.500" fill="#d4182f"/></svg>
<div class="a" style="left:1017px;top:673px;font-size:12.500px;line-height:20px;color:#333">30°C 多云</div>
<svg style="left:1087px;top:680px" width="13" height="8"><path d="M1 7 6.500 1.500 12 7" fill="none" stroke="#333" stroke-width="1.100"/></svg>
<svg style="left:1126px;top:677px" width="15" height="13"><path d="M1 4.500h2L6 1.500v10L3 8.500H1z" fill="none" stroke="#333"/><path d="M8.500 4c1 1.500 1 3.500 0 5M10.500 2.500c1.800 2.500 1.800 5.500 0 8" fill="none" stroke="#333"/></svg>
<svg style="left:1145px;top:680px" width="14" height="9"><rect x=".5" y=".5" width="11.500" height="8" fill="none" stroke="#222"/><rect x="2.500" y="2.500" width="5" height="4" fill="#222"/><rect x="12.500" y="3" width="1.500" height="3" fill="#222"/></svg>
<div class="a" style="left:1165px;top:670px;width:54px;text-align:center;font-size:11px;line-height:15px;color:#333">20:49</div>
<div class="a" style="left:1160px;top:685px;width:64px;text-align:center;font-size:11px;line-height:15px;color:#333">2022/8/17</div>
<svg style="left:1233px;top:676px" width="22" height="22"><path d="M0 0h13v10H5l-3 3v-3H0z" fill="#222"/><path d="M2.500 3h8M2.500 6h8" stroke="#eee"/><circle cx="13" cy="12" r="5.800" fill="#ddd" stroke="#888"/><text x="13" y="15.500" font-size="9" text-anchor="middle" fill="#222" font-family="Liberation Sans">1</text></svg>
<div class="a" style="left:1262px;top:668px;width:1px;height:32px;background:#d5d5d5"></div>
</body></html>
